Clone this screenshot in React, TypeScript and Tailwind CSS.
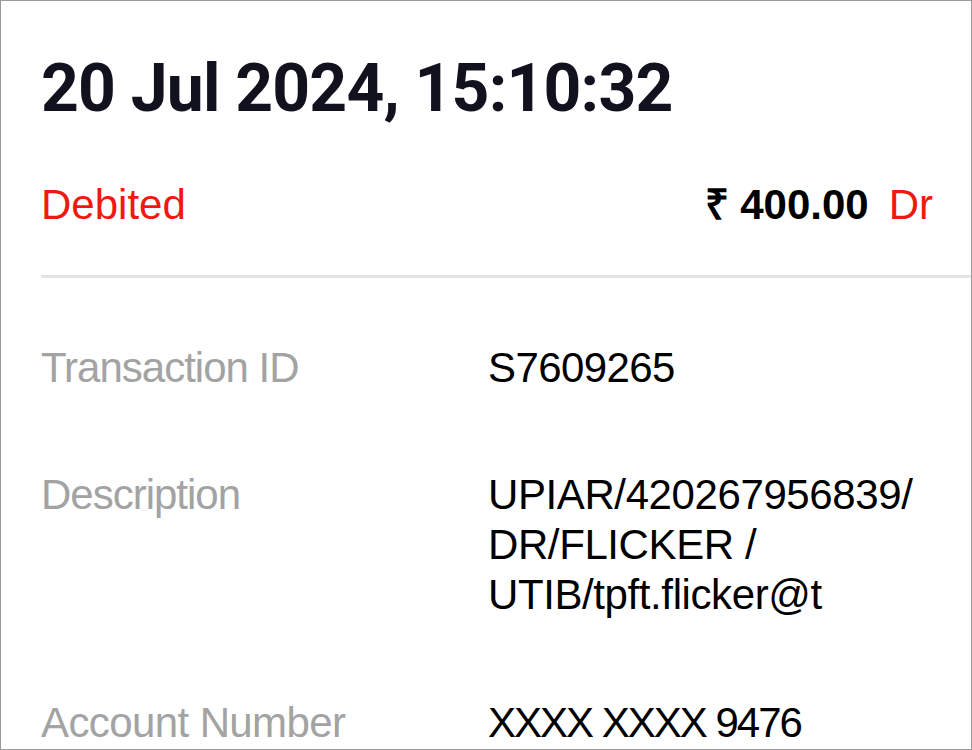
const rows = [
  { label: "Transaction ID", value: ["S7609265"], gap: "mt-0", lt: "tracking-[-1px]", vt: "tracking-[-0.6px]" },
  { label: "Description", value: ["UPIAR/420267956839/", "DR/FLICKER /", "UTIB/tpft.flicker@t"], gap: "mt-[78px]", lt: "tracking-[-1px]", vt: "tracking-[-0.4px] leading-[50px]" },
  { label: "Account Number", value: ["XXXX XXXX 9476"], gap: "mt-[78px]", lt: "tracking-[-0.6px]", vt: "tracking-[-2px]" },
]

const App = () => {
  return (
    <div className="w-[972px] h-[750px] bg-white border border-[#9a9a9a] overflow-hidden font-['Liberation_Sans',Arial,sans-serif]">
      <div className="pl-10">
        <h1 className="pt-[44px] text-[66px] leading-[88px] font-bold text-[#12121f] font-['Roboto',sans-serif] tracking-[-0.8px]">
          20 Jul 2024, 15:10:32
        </h1>
        <div className="flex items-center justify-between pr-[38px] mt-[47px] text-[42px] leading-[50px]">
          <span className="text-[#f0190f]">Debited</span>
          <span>
            <span className="font-bold text-black">₹ 400.00</span>
            <span className="text-[#f0190f] ml-5">Dr</span>
          </span>
        </div>
        <div className="mt-[45px] h-[3px] bg-[#e3e3e3]" />
        <div className="pt-[65px] flex flex-col">
          {rows.map((r) => (
            <div key={r.label} className={`flex text-[42px] leading-[49px] ${r.gap}`}>
              <div className={`w-[447px] text-[#a3a3a3] ${r.lt}`}>{r.label}</div>
              <div className={`text-black ${r.vt}`}>
                {r.value.map((v) => (
                  <div key={v}>{v}</div>
                ))}
              </div>
            </div>
          ))}
        </div>
      </div>
    </div>
  )
}

export default App
